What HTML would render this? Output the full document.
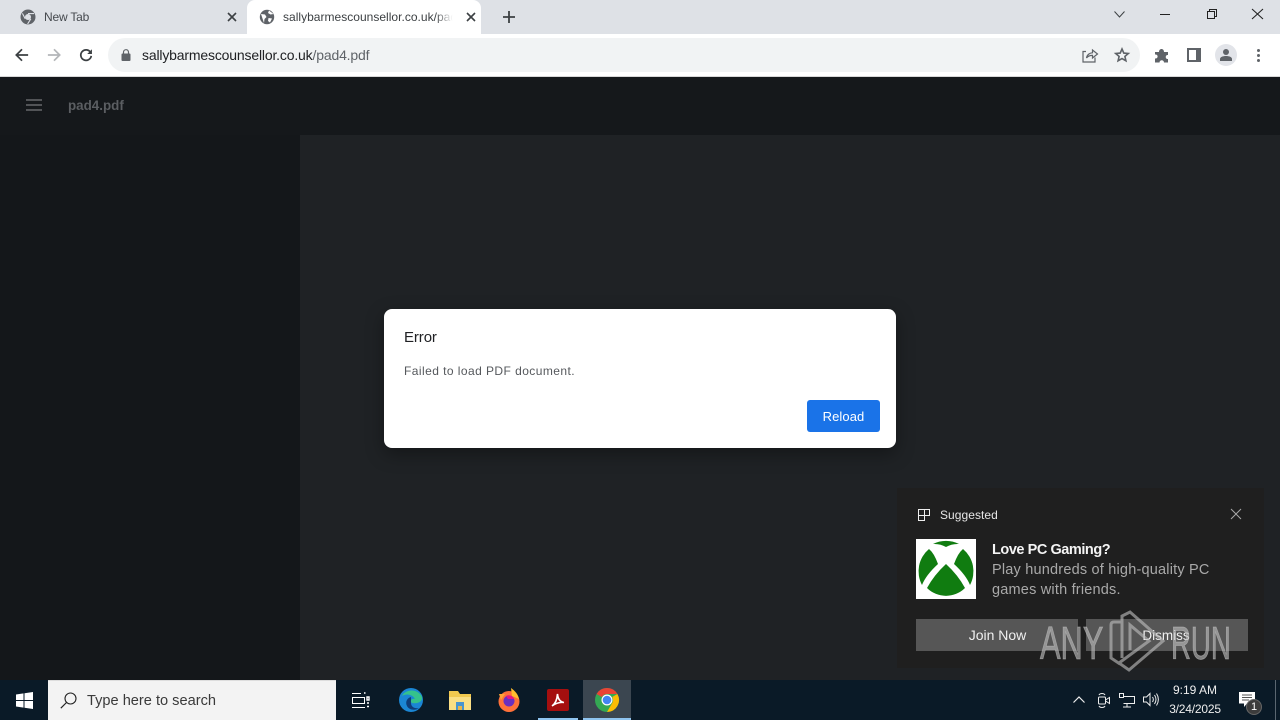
<!DOCTYPE html>
<html><head><meta charset="utf-8"><style>
html,body{margin:0;padding:0;width:1280px;height:720px;overflow:hidden;background:#1f2225;font-family:"Liberation Sans",sans-serif}
.a{position:absolute}
.t{position:absolute;white-space:nowrap;line-height:1}
svg{position:absolute;overflow:visible}
</style></head><body>
<!-- tab strip -->
<div class="a" style="left:0;top:0;width:1280px;height:34px;background:#dee1e6"></div>
<div class="a" style="left:247px;top:0;width:234px;height:36px;background:#fff;border-radius:8px 8px 0 0"></div>
<div class="a" style="left:0;top:34px;width:1280px;height:42px;background:#fff"></div>
<div class="a" style="left:0;top:76px;width:1280px;height:1px;background:#d8d8d8"></div>
<svg style="left:20px;top:9px" width="16" height="16" viewBox="0 0 16 16"><circle cx="8" cy="8" r="7.5" fill="#5f6368"/><circle cx="8" cy="8" r="3" fill="#dee1e6"/><path d="M8 4.6H14M5.2 9.8L2.4 4.4M10.8 9.8L7.6 15" stroke="#dee1e6" stroke-width="1.1"/></svg>
<div class="t" style="left:44px;top:11px;font-size:12px;letter-spacing:-.2px;color:#45494e">New Tab</div>
<svg style="left:228px;top:13px" width="8" height="8"><path d="M0 0L8 8M8 0L0 8" stroke="#3c4043" stroke-width="1.6"/></svg>
<svg style="left:259px;top:9px" width="16" height="16" viewBox="0 0 16 16"><circle cx="8" cy="8" r="7.2" fill="#5f6368"/><path d="M2 5L6 5.5L7.5 8L5.5 10L5 14M10 1.5L9 4L11.5 5.5L14.5 5M9.5 9L13 9.5L11 13.5L9 12Z" fill="#fff"/></svg>
<div class="t" style="left:283px;top:11px;font-size:12px;letter-spacing:.02px;color:#3c4043;width:172px;overflow:hidden">sallybarmescounsellor.co.uk/pad4.pdf</div>
<div class="a" style="left:435px;top:8px;width:22px;height:18px;background:linear-gradient(90deg,rgba(255,255,255,0),#fff 80%)"></div>
<svg style="left:467px;top:13px" width="8" height="8"><path d="M0 0L8 8M8 0L0 8" stroke="#3c4043" stroke-width="1.6"/></svg>
<svg style="left:503px;top:11px" width="12" height="12"><path d="M6 0V12M0 6H12" stroke="#3c4043" stroke-width="1.8"/></svg>
<!-- window controls -->
<svg style="left:1114px;top:11px" width="11" height="7"><path d="M.5 .5L5.5 6L10.5 .5" fill="none" stroke="#3c4043" stroke-width="1"/></svg>
<div class="a" style="left:1160px;top:14px;width:10px;height:1px;background:#222"></div>
<svg style="left:1207px;top:9px" width="10" height="10"><path d="M2.5 2.5V.5H9.5V7.500H7.500M.5 2.5H7.500V9.500H.5Z" fill="none" stroke="#222" stroke-width="1"/></svg>
<svg style="left:1252px;top:9px" width="11" height="10"><path d="M0 0L11 10M11 0L0 10" stroke="#222" stroke-width="1.1"/></svg>
<!-- toolbar -->
<svg style="left:15px;top:48px" width="14" height="14" viewBox="0 0 16 16"><path d="M15 8H2M8 1.5L1.5 8L8 14.5" fill="none" stroke="#3c4043" stroke-width="2"/></svg>
<svg style="left:47px;top:48px" width="14" height="14" viewBox="0 0 16 16"><path d="M1 8H14M8 1.5L14.5 8L8 14.5" fill="none" stroke="#b4b6b9" stroke-width="2"/></svg>
<svg style="left:79px;top:48px" width="14" height="14" viewBox="0 0 16 16"><path d="M13.2 5A6 6 0 1 0 14 9" fill="none" stroke="#3c4043" stroke-width="2"/><path d="M14.8 1.4V6.8H9.4Z" fill="#3c4043"/></svg>
<div class="a" style="left:108px;top:38px;width:1032px;height:34px;border-radius:17px;background:#f1f3f4"></div>
<svg style="left:121px;top:49px" width="10" height="13" viewBox="0 0 10 13"><rect x=".5" y="4.5" width="9" height="7.5" rx="1" fill="#5f6368"/><path d="M2.5 5V3.2a2.5 2.5 0 0 1 5 0V5" fill="none" stroke="#5f6368" stroke-width="1.2"/></svg>
<div class="t" style="left:142px;top:48px;font-size:14px;letter-spacing:-.17px;color:#202124">sallybarmescounsellor.co.uk<span style="color:#5f6368">/pad4.pdf</span></div>
<svg style="left:1082px;top:47px" width="16" height="16" viewBox="0 0 16 16"><path d="M4 4.5H1V15H13V10.5M4.5 11C5 7.5 8 5.8 10.5 5.8V3L15.5 7L10.5 11V8.4C8 8.4 6 9 4.5 11Z" fill="none" stroke="#5f6368" stroke-width="1.2"/></svg>
<svg style="left:1114px;top:47px" width="16" height="16" viewBox="0 0 16 16"><path d="M8 2L9.8 6.1L14.3 6.5L10.9 9.4L11.9 13.8L8 11.5L4.1 13.8L5.1 9.4L1.7 6.5L6.2 6.1Z" fill="none" stroke="#5f6368" stroke-width="1.6"/></svg>
<svg style="left:1154px;top:47px" width="16" height="16" viewBox="0 0 16 16"><path d="M1 5H5C5 1 10 1 10 5H14V8C11 7.5 11 12.5 14 12V15.5H10C10 12.5 5.5 12.5 5.5 15.5H1V11.5C4.5 12 4.5 7 1 7.5Z" fill="#5f6368"/></svg>
<svg style="left:1187px;top:48px" width="14" height="14"><path fill-rule="evenodd" d="M0 0H14V14H0ZM2 2V12H9V2Z" fill="#5f6368"/></svg>
<div class="a" style="left:1215px;top:44px;width:22px;height:22px;border-radius:50%;background:#e2e4e9"></div>
<svg style="left:1219px;top:48px" width="14" height="14" viewBox="0 0 14 14"><circle cx="7" cy="4" r="3" fill="#5f6368"/><path d="M1 13V11C1 9 4 8 7 8S13 9 13 11V13Z" fill="#5f6368"/></svg>
<div class="a" style="left:1257px;top:49px;width:3px;height:3px;border-radius:50%;background:#5f6368;box-shadow:0 5px 0 #5f6368,0 10px 0 #5f6368"></div>
<!-- viewer -->
<div class="a" style="left:0;top:77px;width:1280px;height:58px;background:#15181b"></div>
<div class="a" style="left:0;top:135px;width:300px;height:545px;background:#14171a"></div>
<div class="a" style="left:300px;top:135px;width:980px;height:545px;background:#1f2225"></div>
<svg style="left:26px;top:99px" width="16" height="12"><path d="M0 1H16M0 6H16M0 11H16" stroke="#5b5d60" stroke-width="1.8"/></svg>
<div class="t" style="left:68px;top:99px;font-size:13.4px;font-weight:700;color:#5b5e62">pad4.pdf</div>
<!-- dialog -->
<div class="a" style="left:384px;top:309px;width:512px;height:139px;background:#fff;border-radius:8px;box-shadow:0 6px 18px rgba(0,0,0,.35)"></div>
<div class="t" style="left:404px;top:330px;font-size:15px;letter-spacing:-.1px;color:#202124">Error</div>
<div class="t" style="left:404px;top:365px;font-size:12px;letter-spacing:.44px;color:#55585c">Failed to load PDF document.</div>
<div class="a" style="left:807px;top:400px;width:73px;height:32px;background:#1a73e8;border-radius:3px"></div>
<div class="t" style="left:807px;top:410px;width:73px;text-align:center;font-size:13px;letter-spacing:.1px;color:#fff">Reload</div>
<!-- toast -->
<div class="a" style="left:897px;top:488px;width:367px;height:180px;background:#1f1f1f"></div>
<svg style="left:918px;top:509px" width="12" height="12"><path d="M.5 .5H11.5V6.5H6.5V11.5H.5ZM.5 6.5H6.5V.5" fill="none" stroke="#eee" stroke-width="1"/></svg>
<div class="t" style="left:940px;top:509px;font-size:12px;letter-spacing:.05px;color:#e6e6e6">Suggested</div>
<svg style="left:1231px;top:509px" width="10" height="10"><path d="M0 0L10 10M10 0L0 10" stroke="#a8a8a8" stroke-width="1"/></svg>
<div class="a" style="left:916px;top:539px;width:60px;height:60px;background:#fff"></div>
<svg style="left:916px;top:539px" width="60" height="60" viewBox="0 0 60 60" fill="#107c10"><path d="M17 5A29 29 0 0 1 43 5Q36 4.500 30 8Q24 4.500 17 5Z"/><path d="M13 10Q18 14 22 25Q10 36 6 46A29 29 0 0 1 13 10Z"/><path d="M47 10Q42 14 38 25Q50 36 54 46A29 29 0 0 0 47 10Z"/><path d="M30 25Q42 36 49 49A27 27 0 0 1 11 49Q18 36 30 25Z"/></svg>
<div class="t" style="left:992px;top:543px;font-size:14.5px;font-weight:700;letter-spacing:-.45px;color:#f4f4f4">Love PC Gaming?</div>
<div class="t" style="left:992px;top:563px;font-size:14.5px;letter-spacing:.2px;color:#a9a9a9">Play hundreds of high-quality PC</div>
<div class="t" style="left:992px;top:583px;font-size:14.5px;letter-spacing:.2px;color:#a9a9a9">games with friends.</div>
<div class="a" style="left:916px;top:619px;width:162px;height:32px;background:#565656"></div>
<div class="a" style="left:1078px;top:619px;width:8px;height:32px;background:#1f1f1f"></div>
<div class="a" style="left:1086px;top:619px;width:162px;height:32px;background:#565656"></div>
<div class="t" style="left:916px;top:628px;width:163px;text-align:center;font-size:14px;color:#f0f0f0">Join Now</div>
<div class="t" style="left:1086px;top:629px;width:160px;text-align:center;font-size:13.5px;color:#f0f0f0">Dismiss</div>
<!-- watermark -->
<div class="t" style="left:1040px;top:620px;font-size:46px;color:rgba(190,190,190,.62);-webkit-text-stroke:.8px rgba(190,190,190,.62);transform:scaleX(.67);transform-origin:0 0">ANY</div>
<div class="t" style="left:1171px;top:620px;font-size:46px;color:rgba(190,190,190,.62);-webkit-text-stroke:.8px rgba(190,190,190,.62);transform:scaleX(.6);transform-origin:0 0">RUN</div>
<svg style="left:1108px;top:608px" width="60" height="64" viewBox="0 0 60 64"><path d="M13 14H6Q3 14 3 17V50L12 56M14 50V8L22 4L55 33L21 62L11 55L41 33L22 17V42" fill="none" stroke="rgba(190,190,190,.62)" stroke-width="3"/></svg>
<!-- taskbar -->
<div class="a" style="left:0;top:680px;width:1280px;height:40px;background:#0a1a27"></div>
<svg style="left:16px;top:692px" width="17" height="17"><path d="M0 2.5L7.5 1.4V8H0ZM8.5 1.2L17 0V8H8.5ZM0 9H7.5V15.6L0 14.5ZM8.5 9H17V17L8.5 15.8Z" fill="#fff"/></svg>
<div class="a" style="left:48px;top:680px;width:288px;height:40px;background:#f3f3f3;border-top:1px solid #ddd;box-sizing:border-box"></div>
<svg style="left:60px;top:692px" width="17" height="17" viewBox="0 0 17 17"><circle cx="10.5" cy="6.5" r="5.5" fill="none" stroke="#222" stroke-width="1.1"/><path d="M6.5 10.5L.8 16.2" stroke="#222" stroke-width="1.2"/></svg>
<div class="t" style="left:87px;top:694px;font-size:14.6px;color:#3a3a3a">Type here to search</div>
<svg style="left:352px;top:692px" width="17" height="17" fill="none" stroke="#fff" stroke-width="1"><path d="M.5 5.5H12.5V11.5H.5ZM0 1.5H9M0 15.5H13"/><path d="M12 1H13.5M15 5H17V8H15ZM15 11H17M15 14.5H17" stroke-width="1.4"/></svg>
<svg style="left:399px;top:688px" width="24" height="24" viewBox="0 0 24 24"><circle cx="12" cy="12" r="12" fill="#1b86d4"/><path d="M3 8C6 1 19 0 23 9C24 14 18 16 13 15C10 13 13 10 16 11C14 7 8 5 3 8Z" fill="#35c28b"/><path d="M12 9C8 10 6 14 8 18C10 22 16 23 20 20C16 21 12 19 12 15Z" fill="#0f3d78"/></svg>
<svg style="left:449px;top:691px" width="22" height="19" viewBox="0 0 22 19"><path d="M0 0H9L11 3H22V19H0Z" fill="#f2c94f"/><path d="M0 6H22V19H0Z" fill="#fbdf84"/><path d="M7 11H15V19H7Z" fill="#4a95cf"/><path d="M9 15H13V19H9Z" fill="#e8b54a"/></svg>
<svg style="left:497px;top:688px" width="24" height="24" viewBox="0 0 24 24"><circle cx="12" cy="13.5" r="10.5" fill="#ff7139"/><path d="M14 0C18 3 21 6 22 11L15 8Z" fill="#ffbd2e"/><path d="M2 6L4 12L8 6Z" fill="#ffa436"/><circle cx="12" cy="13" r="5.5" fill="#6a2fbf"/><path d="M9 8C12 6 16 8 17 11L11 11Z" fill="#e31587"/></svg>
<div class="a" style="left:547px;top:689px;width:22px;height:22px;background:#a50f0f;border-radius:2px"></div>
<svg style="left:551px;top:692px" width="14" height="16" viewBox="0 0 14 16"><path d="M1 14C4 12 6 8 6.500 2C7 8 10 10 13 10.500C9 10 5 11 1 14Z" fill="none" stroke="#fff" stroke-width="1.600"/></svg>
<div class="a" style="left:538px;top:718px;width:40px;height:2px;background:#8fc4ef"></div>
<div class="a" style="left:583px;top:680px;width:48px;height:40px;background:#3b4650"></div>
<div class="a" style="left:583px;top:718px;width:48px;height:2px;background:#8fc4ef"></div>
<svg style="left:595px;top:688px" width="24" height="24" viewBox="0 0 24 24"><circle cx="12" cy="12" r="12" fill="#34a853"/><path d="M12 0A12 12 0 0 1 22.400 6H12A6 6 0 0 0 6.800 9L1.600 6A12 12 0 0 1 12 0Z" fill="#ea4335"/><path d="M22.400 6A12 12 0 0 1 12 24L17.200 15A6 6 0 0 0 17.200 9Z" fill="#fbbc04"/><circle cx="12" cy="12" r="5.500" fill="#fff"/><circle cx="12" cy="12" r="4.300" fill="#4285f4"/></svg>
<!-- tray -->
<svg style="left:1073px;top:696px" width="12" height="7"><path d="M.5 6.500L6 1L11.500 6.500" fill="none" stroke="#eee" stroke-width="1.200"/></svg>
<svg style="left:1097px;top:692px" width="14" height="16" fill="none" stroke="#eee" stroke-width="1"><rect x="1.500" y="5" width="7" height="7" rx="1"/><path d="M8.500 8L12.500 5.500V11.500L8.500 9M2 3C3 1 7 1 8 3M2 14C3 16 7 16 8 14"/></svg>
<svg style="left:1119px;top:693px" width="16" height="15" fill="none" stroke="#eee" stroke-width="1"><path d="M4.500 3.500H15.500V10.500H4.500M8 10.500V13.500M4 14H12"/><rect x=".5" y=".5" width="4" height="4"/></svg>
<svg style="left:1143px;top:692px" width="16" height="15" fill="none" stroke="#eee" stroke-width="1"><path d="M.5 5H3.500L7 1.500V13.500L3.500 10H.5ZM9.500 5C10.500 6.500 10.500 8.500 9.500 10M11.500 3C13.500 6 13.500 9 11.500 12M13.500 1.500C16 5.500 16 9.500 13.500 13.500"/></svg>
<div class="t" style="left:1162px;top:684px;width:66px;text-align:center;font-size:12px;color:#eee">9:19 AM</div>
<div class="t" style="left:1162px;top:703px;width:66px;text-align:center;font-size:12px;letter-spacing:-.2px;color:#eee">3/24/2025</div>
<svg style="left:1239px;top:692px" width="16" height="15"><path d="M0 0H16V11.500H8L5 15V11.500H0Z" fill="#fff"/><path d="M3 3H13M3 5.500H13M3 8H10" stroke="#555" stroke-width="1"/></svg>
<div class="a" style="left:1246px;top:699px;width:16px;height:16px;border-radius:50%;background:#3c3c3c;border:1px solid #666;box-sizing:border-box"></div>
<div class="t" style="left:1246px;top:702px;width:16px;text-align:center;font-size:11px;color:#fff">1</div>
<div class="a" style="left:1275px;top:680px;width:1px;height:40px;background:#5a6670"></div>
</body></html>
